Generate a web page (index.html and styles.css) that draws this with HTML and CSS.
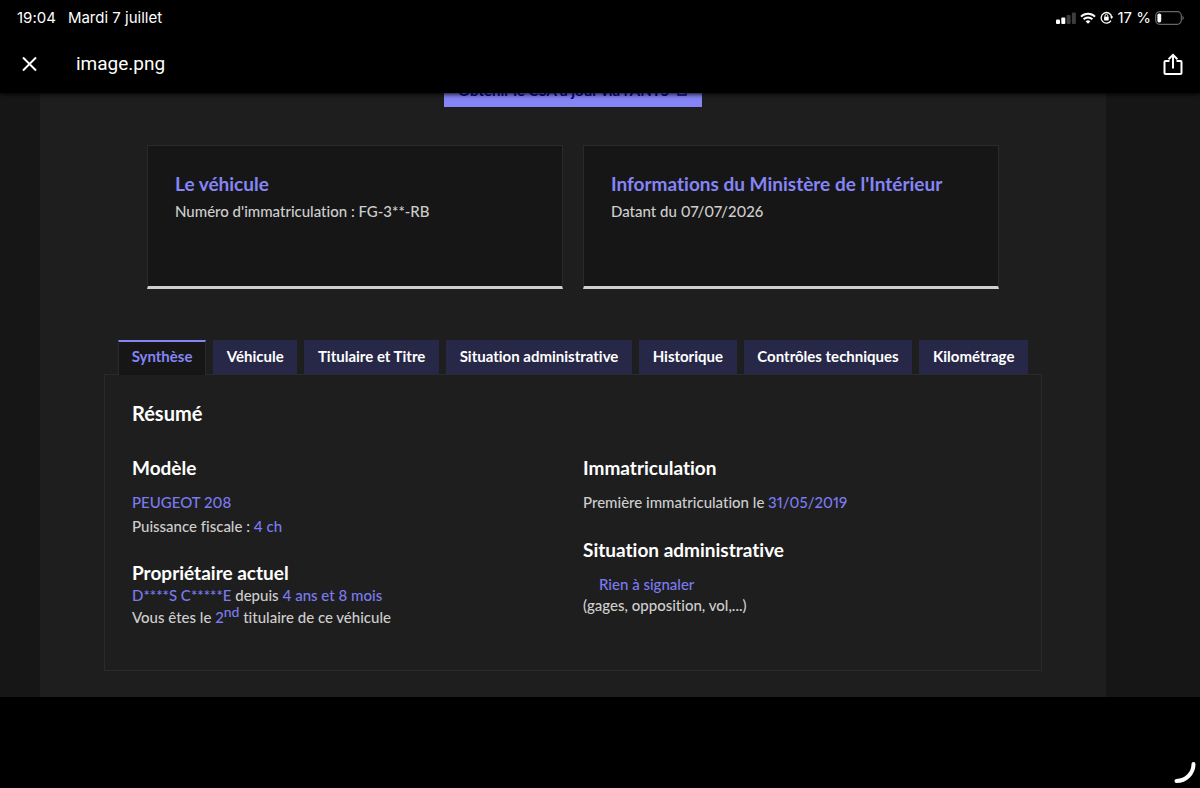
FILE: index.html
```html
<!DOCTYPE html>
<html lang="fr">
<head>
  <meta charset="UTF-8" />
  <meta name="viewport" content="width=device-width, initial-scale=1" />
  <title>image.png</title>
  <link rel="stylesheet" href="styles.css">
</head>
<body>
  <header class="topbar">
    <div class="status">
      <span class="time">19:04</span>
      <span class="date">Mardi 7 juillet</span>
      <div class="status-icons">
        <svg width="20" height="12" viewBox="0 0 20 12" fill="#fff">
          <rect x="0" y="7.5" width="4" height="4.5" rx="1" />
          <rect x="5.3" y="5.5" width="4" height="6.5" rx="1" />
          <rect x="10.6" y="3" width="4" height="9" rx="1" fill="#3c3c3c" />
          <rect x="15.9" y="0.5" width="4" height="11.5" rx="1" fill="#3c3c3c" />
        </svg>
        <svg width="16" height="12" viewBox="0 0 16 12" fill="none" stroke="#fff" stroke-width="2">
          <path d="M1 4.6a10 10 0 0 1 14 0" />
          <path d="M3.6 7.3a6.3 6.3 0 0 1 8.8 0" />
          <path d="M8 11.8L5.7 9.4a3.3 3.3 0 0 1 4.6 0z" fill="#fff" stroke="none" />
        </svg>
        <svg width="13" height="13" viewBox="0 0 13 13" fill="none" stroke="#fff" stroke-width="1.3">
          <path d="M11 9.6A5.3 5.3 0 1 1 11.7 6" />
          <path d="M10 5.6h3.2L11.6 8z" fill="#fff" stroke="none" />
          <rect x="4.1" y="5.8" width="4.6" height="3.6" rx="0.6" fill="#fff" stroke="none" />
          <path d="M5 6V4.8a1.4 1.4 0 0 1 2.8 0V6" stroke-width="1" />
        </svg>
        <span class="percent">17 %</span>
        <svg width="29" height="14" viewBox="0 0 29 14">
          <rect x="0.7" y="0.7" width="25.6" height="12.6" rx="4" fill="none" stroke="#666" stroke-width="1.2" />
          <rect x="2.4" y="2.6" width="3.8" height="8.8" rx="1.6" fill="#fff" />
          <path d="M27.4 5v4c1.8-.8 1.8-3.2 0-4z" fill="#666" />
        </svg>
      </div>
    </div>
    <div class="viewer-bar">
      <button class="icon-btn" type="button" aria-label="Fermer">
        <svg width="17" height="16" viewBox="0 0 17 16" stroke="#fff" stroke-width="2"><path d="M2 1.5l13 13M15 1.5l-13 13" /></svg>
      </button>
      <h1 class="filename">image.png</h1>
      <button class="icon-btn" type="button" aria-label="Partager">
        <svg width="20" height="22" viewBox="0 0 20 22" fill="none" stroke="#fff" stroke-width="2">
          <path d="M6.5 8h-4a1 1 0 0 0-1 1v11a1 1 0 0 0 1 1h15a1 1 0 0 0 1-1V9a1 1 0 0 0-1-1h-4" />
          <path d="M10 15.5V2M5.6 6.3L10 1.9l4.4 4.4" />
        </svg>
      </button>
    </div>
  </header>

  <main class="viewer">
    <div class="page">
      <a class="cta" href="#">Obtenir le CSA à jour via l'ANTS
        <svg width="11" height="11" viewBox="0 0 11 11" fill="none" stroke="#000091" stroke-width="1.4"><path d="M4 2H1v8h8V7M6 1h4v4M10 1L5 6" /></svg>
      </a>

      <div class="cards">
        <section class="card">
          <h2>Le véhicule</h2>
          <p>Numéro d'immatriculation : FG-3**-RB</p>
        </section>
        <section class="card">
          <h2>Informations du Ministère de l'Intérieur</h2>
          <p>Datant du 07/07/2026</p>
        </section>
      </div>

      <div class="tabs-block">
        <div class="tabs" role="tablist">
          <button class="tab active" type="button" role="tab" aria-selected="true">Synthèse</button>
          <button class="tab" type="button" role="tab">Véhicule</button>
          <button class="tab" type="button" role="tab">Titulaire et Titre</button>
          <button class="tab" type="button" role="tab">Situation administrative</button>
          <button class="tab" type="button" role="tab">Historique</button>
          <button class="tab" type="button" role="tab">Contrôles techniques</button>
          <button class="tab" type="button" role="tab">Kilométrage</button>
        </div>

        <div class="panel" role="tabpanel">
          <h2>Résumé</h2>
          <div class="columns">
            <div>
              <h3>Modèle</h3>
              <p class="line"><b>PEUGEOT 208</b></p>
              <p class="line">Puissance fiscale : <b>4 ch</b></p>
              <h3 class="owner">Propriétaire actuel</h3>
              <p><b>D****S C*****E</b> depuis <b>4 ans et 8 mois</b></p>
              <p>Vous êtes le <b>2<sup>nd</sup></b> titulaire de ce véhicule</p>
            </div>
            <div>
              <h3>Immatriculation</h3>
              <p class="line">Première immatriculation le <b>31/05/2019</b></p>
              <h3 class="situation">Situation administrative</h3>
              <p class="clear"><b>Rien à signaler</b></p>
              <p>(gages, opposition, vol,...)</p>
            </div>
          </div>
        </div>
      </div>
    </div>
  </main>

  <footer class="bottombar">
    <svg class="spinner" width="22" height="22" viewBox="0 0 22 22" fill="none" stroke="#fff" stroke-width="4" stroke-linecap="round"><path d="M19.5 2A17 17 0 0 1 2.5 19" /></svg>
  </footer>
</body>
</html>
```
FILE: styles.css
```css
* { box-sizing: border-box; }
body {
  margin: 0;
  height: 100vh;
  display: flex;
  flex-direction: column;
  background: #000;
  color: #cecece;
  font-family: Lato, "Open Sans", sans-serif;
  font-size: 15px;
  font-weight: 500;
  line-height: 22px;
  font-variant-ligatures: none;
  font-variant-numeric: proportional-nums;
}
h1, h2, h3, p { margin: 0; }
svg { display: block; flex: none; }
button { font: inherit; border: 0; cursor: pointer; }

/* top bar */
.topbar { position: relative; z-index: 1; flex: none; background: #000; color: #fff; box-shadow: 0 1px 5px #000; }
.status { display: flex; align-items: center; gap: 12px; height: 35px; padding: 0 16px 0 17px; font-family: Inter, sans-serif; font-size: 15px; font-weight: 400; }
.status-icons { display: flex; align-items: center; gap: 4px; margin-left: auto; }
.viewer-bar { display: flex; align-items: center; height: 58px; padding: 0 17px 0 21px; }
.icon-btn { padding: 0; background: none; }
.filename { flex: 1; margin-left: 38px; font-family: Roboto, sans-serif; font-size: 19px; font-weight: 400; }

/* scrolled page, only its lower part is visible */
.viewer { flex: 1; min-height: 0; display: flex; align-items: flex-end; overflow: hidden; padding: 0 94px 0 40px; background: #161616; }
.page { flex: 1; min-width: 0; display: flex; flex-direction: column; padding-bottom: 26px; background: #1e1e1e; }
.cta { display: flex; align-items: center; align-self: center; gap: 8px; height: 34px; margin: 0 0 38px; padding: 0 14px; background: #8585f6; color: #000091; font-weight: 700; text-decoration: none; }

.cards { display: grid; grid-template-columns: 1fr 1fr; gap: 20px; margin: 0 107px 51px; }
.card { min-height: 144px; padding: 26px 27px; background: #161616; border: 1px solid #2a2a2a; border-bottom: 3px solid #cecece; }
.card h2 { margin-bottom: 4px; color: #8585f6; font-size: 19px; line-height: 24px; }

/* tabs */
.tabs-block { margin: 0 64px; }
.tabs { display: flex; gap: 7px; padding: 0 14px; }
.tab { flex: 1 1 auto; height: 34px; padding: 0 12px 3px; background: #272747; color: #fff; font-weight: 700; white-space: nowrap; }
.tab.active { height: 35px; margin-bottom: -1px; padding: 0 11px 6px; background: #161616; color: #8585f6; border: 1px solid #2a2a2a; border-top: 2px solid #8585f6; border-bottom: 0; }
.panel { padding: 26px 27px 42px; border: 1px solid #2a2a2a; }
.panel h2, .panel h3 { color: #fff; font-size: 19px; line-height: 24px; }
.panel h2 { font-size: 20px; }
.panel b { color: #7b7bf0; font-weight: 500; }
.columns { display: grid; grid-template-columns: 1fr 1fr; gap: 20px; margin-top: 31px; }
.line { line-height: 24px; }
h3 + .line { margin-top: 10px; }
.panel .owner { margin-top: 24px; line-height: 22px; }
.panel .situation { margin-top: 24px; }
.clear { margin-top: 12px; padding-left: 16px; line-height: 20px; }
sup { font-size: 14px; line-height: 0; }

/* bottom bar */
.bottombar { display: flex; justify-content: flex-end; align-items: flex-end; flex: none; height: 91px; padding: 4px; }
```
